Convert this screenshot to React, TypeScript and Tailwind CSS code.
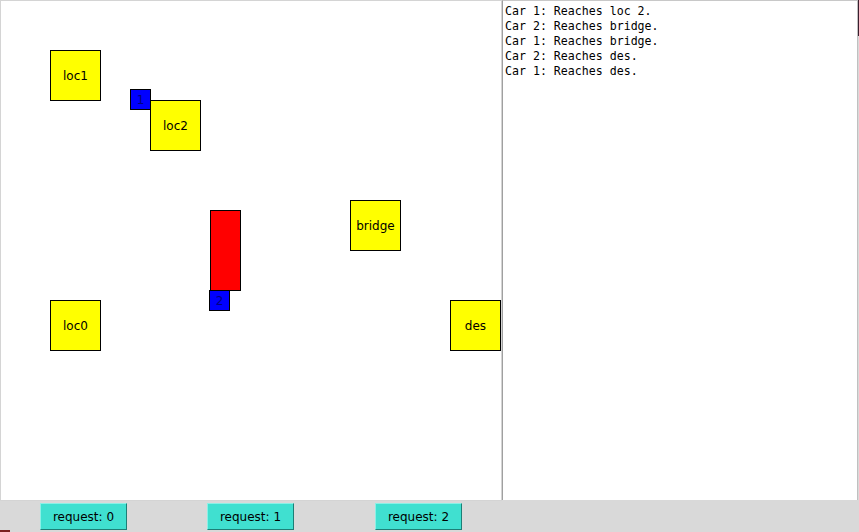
import React from "react";

const places = [
  { name: "loc1", x: 50, y: 50 },
  { name: "loc2", x: 150, y: 100 },
  { name: "bridge", x: 350, y: 200 },
  { name: "loc0", x: 50, y: 300 },
  { name: "des", x: 450, y: 300 },
];

const log = [
  "Car 1: Reaches loc 2.",
  "Car 2: Reaches bridge.",
  "Car 1: Reaches bridge.",
  "Car 2: Reaches des.",
  "Car 1: Reaches des.",
];

const sans = { fontFamily: '"DejaVu Sans", Verdana, sans-serif' };

export default function App() {
  return (
    <div className="w-[859px] h-[532px] bg-[#d9d9d9] flex flex-col overflow-hidden relative">
      <div className="flex h-[501px]">
        {/* canvas */}
        <div className="relative w-[502px] h-[501px] bg-white border border-[#d4d4d4]">
          {places.map((p) => (
            <div
              key={p.name}
              className="absolute w-[51px] h-[51px] bg-[#ffff00] border border-black flex items-center justify-center text-[12px] text-black"
              style={{ left: p.x - 1, top: p.y - 1, ...sans }}
            >
              {p.name}
            </div>
          ))}

          {/* bridge block */}
          <div className="absolute left-[209px] top-[209px] w-[31px] h-[81px] bg-[#ff0000] border border-black" />

          {/* cars */}
          <div
            className="absolute left-[129px] top-[88px] w-[21px] h-[21px] bg-[#0000ff] border border-black flex items-center justify-center text-[12px] text-[#000080]"
            style={sans}
          >
            1
          </div>
          <div
            className="absolute left-[208px] top-[289px] w-[21px] h-[21px] bg-[#0000ff] border border-black flex items-center justify-center text-[12px] text-[#000080]"
            style={sans}
          >
            2
          </div>
        </div>

        {/* log text */}
        <div className="w-[356px] h-[500px] bg-white border-l border-l-[#a0a0a0] border-t border-t-[#c8c8c8] border-r border-r-[#c0c0c0] pl-[2px] pt-[3px]">
          {log.map((line, i) => (
            <div
              key={i}
              className="text-[11.6px] leading-[15px] text-black whitespace-pre"
              style={{ fontFamily: '"DejaVu Sans Mono", "Liberation Mono", monospace' }}
            >
              {line}
            </div>
          ))}
        </div>
        <div className="w-[1px] h-[36px] bg-[#3a1f2e]" />
      </div>

      {/* buttons */}
      <div className="flex items-start pt-[2px] pl-[40px] gap-[80px]">
        {["request: 0", "request: 1", "request: 2"].map((t, i) => (
          <button
            key={t}
            className={`w-[87px] h-[27px] bg-[#40e0d0] border border-t-[#8cf0e6] border-l-[#8cf0e6] border-b-[#1d7f76] border-r-[#1d7f76] text-[12px] text-black flex items-center justify-center ${i === 2 ? "ml-[1px]" : ""}`}
            style={sans}
          >
            {t}
          </button>
        ))}
      </div>
      <div className="absolute left-0 bottom-0 w-[10px] h-[2px] bg-[#7a1f1f]" />
    </div>
  );
}
